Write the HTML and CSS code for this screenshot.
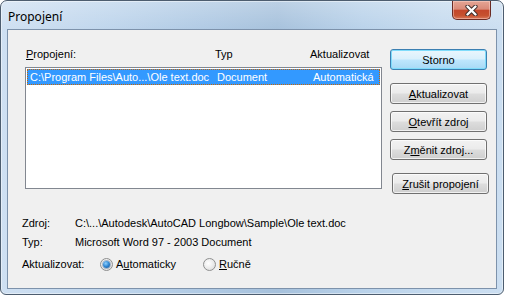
FILE: index.html
```html
<!DOCTYPE html>
<html lang="cs">
<head>
  <meta charset="UTF-8" />
  <title>Propojení</title>
  <link rel="stylesheet" href="styles.css">
</head>
<body>

  <div class="window">
    <div class="titlebar">
      <span class="title">Propojení</span>
      <div class="close">
        <svg width="13" height="11" viewBox="0 0 13 11">
          <path d="M2.5 1.5 L10.5 9.5 M10.5 1.5 L2.5 9.5" stroke="#3a2a28" stroke-width="4.2" stroke-linecap="round"/>
          <path d="M2.5 1.5 L10.5 9.5 M10.5 1.5 L2.5 9.5" stroke="#ffffff" stroke-width="2.4" stroke-linecap="round"/>
        </svg>
      </div>
    </div>

    <div class="client">
      <div class="top">
        <div class="links">
          <div class="head">
            <span class="c1"><u>P</u>ropojení:</span>
            <span class="c2">Typ</span>
            <span class="c3">Aktualizovat</span>
          </div>
          <div class="list">
            <div class="row selected">
              <span class="c1">C:\Program Files\Auto...\Ole text.doc</span>
              <span class="c2">Document</span>
              <span class="c3">Automatická</span>
            </div>
          </div>
        </div>

        <div class="buttons">
          <button class="btn default">Storno</button>
          <button class="btn gap-big"><u>A</u>ktualizovat</button>
          <button class="btn"><u>O</u>tevřít zdroj</button>
          <button class="btn">Z<u>m</u>ěnit zdroj...</button>
          <button class="btn gap-big shifted"><u>Z</u>rušit propojení</button>
        </div>
      </div>

      <div class="info">
        <div class="info-row"><span class="label">Zdroj:</span><span>C:\...\Autodesk\AutoCAD Longbow\Sample\Ole text.doc</span></div>
        <div class="info-row"><span class="label">Typ:</span><span>Microsoft Word 97 - 2003 Document</span></div>
        <div class="info-row radios">
          <span class="label wide">Aktualizovat:</span>
          <span class="option first"><span class="radio checked"></span>A<u>u</u>tomaticky</span>
          <span class="option"><span class="radio"></span><u>R</u>učně</span>
        </div>
      </div>
    </div>
  </div>

</body>
</html>
```

FILE: styles.css
```css
body {
  margin: 0;
  background: #ffffff;
  font-family: "Liberation Sans", Arial, sans-serif;
  font-size: 11px;
  color: #000;
}

.window {
  box-sizing: border-box;
  width: 504px;
  height: 295px;
  border: 1px solid #4d5d6f;
  border-radius: 7px 7px 6px 6px;
  background:
    linear-gradient(rgba(255,255,255,0.25), rgba(255,255,255,0) 30px),
    linear-gradient(90deg, #cfe0f2 0%, #bed5ec 22%, #b0cae4 40%, #a6c1dc 55%, #b9d2ea 72%, #c6dbef 88%, #cbdef1 100%);
  box-shadow: inset 0 0 0 1px rgba(255,255,255,0.45);
}

.titlebar {
  height: 28px;
  display: flex;
  align-items: flex-start;
}

.title {
  font-family: "Noto Sans", "Open Sans", sans-serif;
  font-size: 12px;
  padding: 7px 0 0 7px;
  color: #000;
}

.close {
  box-sizing: border-box;
  margin-left: auto;
  margin-right: 12px;
  width: 39px;
  height: 19px;
  border: 1px solid #6b2b24;
  border-top: none;
  border-radius: 0 0 5px 5px;
  background: linear-gradient(#e5a595 0%, #d98a78 45%, #c4472b 52%, #c6512f 80%, #d9785a 100%);
  box-shadow: inset 0 0 0 1px rgba(255,220,210,0.45);
  display: flex;
  align-items: center;
  justify-content: center;
}

.client {
  box-sizing: border-box;
  height: 260px;
  margin: 0 6px 0 6px;
  border: 1px solid #7d92ab;
  background: #f0f0f0;
}

.top {
  display: flex;
  padding: 18px 0 0 17px;
}

.links {
  width: 357px;
}

.head {
  display: flex;
  height: 13px;
  line-height: 13px;
  padding-left: 1px;
  margin-bottom: 6px;
}

.head .c1 { width: 189px; }
.head .c2 { width: 95px; }

.list {
  box-sizing: border-box;
  height: 122px;
  border: 1px solid #828790;
  background: #ffffff;
  padding: 1px;
}

.row {
  box-sizing: border-box;
  display: flex;
  height: 16px;
  line-height: 14px;
  padding-left: 2px;
  white-space: nowrap;
}

.row .c1 { width: 187px; }
.row .c2 { width: 96px; }

.row.selected {
  background: #3399ff;
  color: #ffffff;
  border: 1px dotted #cc6600;
}

.buttons {
  display: flex;
  flex-direction: column;
  gap: 7px;
  margin-left: 8px;
  padding-top: 1px;
}

.btn {
  box-sizing: border-box;
  width: 97px;
  height: 21px;
  padding: 0;
  font-family: "Liberation Sans", Arial, sans-serif;
  font-size: 11px;
  color: #000;
  border: 1px solid #707070;
  border-radius: 3px;
  background: linear-gradient(#f2f2f2 0%, #ebebeb 48%, #dddddd 52%, #cfcfcf 100%);
  box-shadow: inset 0 0 0 1px rgba(255,255,255,0.7);
}

.btn.default {
  border-color: #3c7fb1;
  background: linear-gradient(#eaf6fd 0%, #d9f0fc 48%, #bee6fd 52%, #a7d9f5 100%);
  box-shadow: inset 0 0 0 1px #7fdcfb;
}

.btn.gap-big {
  margin-top: 6px;
}

.btn.shifted {
  margin-left: 2px;
}

.info {
  padding: 20px 0 0 14px;
}

.info-row {
  display: flex;
  align-items: center;
  height: 19px;
  line-height: 19px;
  white-space: nowrap;
}

.label {
  width: 53px;
}

.label.wide {
  width: 78px;
}

.radios {
  margin-top: 3px;
}

.option {
  display: flex;
  align-items: center;
}

.option.first {
  width: 103px;
}

.radio {
  box-sizing: border-box;
  width: 13px;
  height: 13px;
  margin-right: 3px;
  border: 1px solid #8e8f8f;
  border-radius: 50%;
  background: radial-gradient(circle at 40% 40%, #ffffff 0%, #f0f0f0 40%, #d6d6d6 100%);
  display: flex;
  align-items: center;
  justify-content: center;
}

.radio.checked::after {
  content: "";
  width: 7px;
  height: 7px;
  border-radius: 50%;
  background: radial-gradient(circle at 40% 35%, #8fd0ff 0%, #2f86d2 50%, #164e8e 100%);
  box-shadow: 0 0 0 1px rgba(30,70,120,0.35);
}
```
